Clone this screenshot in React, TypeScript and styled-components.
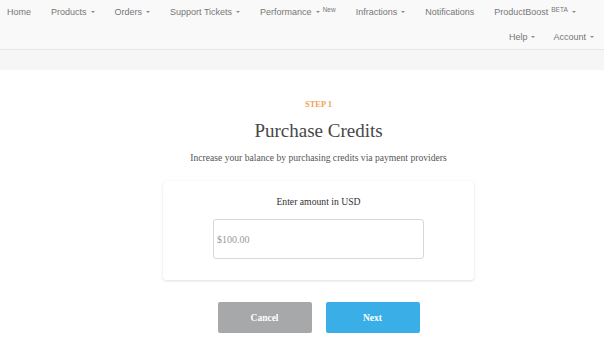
import React from "react";
import styled, { createGlobalStyle } from "styled-components";

const Global = createGlobalStyle`
  html, body { margin: 0; padding: 0; background: #ffffff; }
  body { width: 604px; height: 348px; overflow: hidden; }
  * { box-sizing: border-box; }
`;

const Page = styled.div`
  width: 604px;
  min-height: 348px;
  background: #ffffff;
`;

const NavBar = styled.nav`
  display: flex;
  flex-wrap: wrap;
  padding: 0 10px 0 7px;
  height: 50px;
  background: #f9f9f9;
  border-bottom: 1px solid #e6e6e6;
  font-family: "Liberation Sans", Arial, sans-serif;
  font-size: 9px;
  color: #777777;
`;

const NavGroup = styled.div<{ $right?: boolean }>`
  display: flex;
  gap: ${(p) => (p.$right ? "18px" : "20px")};
  margin-left: ${(p) => (p.$right ? "auto" : "0")};
  flex-shrink: 0;
`;

const NavItem = styled.div`
  display: flex;
  align-items: center;
  height: 24px;
  white-space: nowrap;
`;

const Caret = styled.span`
  display: inline-block;
  width: 0;
  height: 0;
  margin-left: 4px;
  border-left: 2px solid transparent;
  border-right: 2px solid transparent;
  border-top: 2.5px solid #8a8a8a;
`;

const Sup = styled.sup`
  font-size: 6.5px;
  margin-left: 3px;
  position: relative;
  top: -3px;
  vertical-align: baseline;
`;

const Band = styled.div`
  height: 20px;
  background: #f6f6f6;
`;

const Main = styled.main`
  display: flex;
  flex-direction: column;
  align-items: center;
  padding: 29px 0 0 33px;
  font-family: "Liberation Serif", "Times New Roman", serif;
`;

const Step = styled.div`
  font-size: 8.5px;
  line-height: 11px;
  font-weight: bold;
  color: #f3a255;
`;

const Title = styled.h1`
  margin: 10px 0 0;
  font-size: 19px;
  line-height: 22px;
  font-weight: normal;
  color: #474747;
`;

const Subtitle = styled.p`
  margin: 10px 0 0;
  font-size: 9.6px;
  line-height: 12px;
  color: #555555;
`;

const Card = styled.section`
  margin-top: 17px;
  width: 311px;
  padding: 15px 0 21px;
  display: flex;
  flex-direction: column;
  align-items: center;
  background: #ffffff;
  border-radius: 3px;
  box-shadow: 0 1px 3px rgba(0, 0, 0, 0.12), 0 0 1px rgba(0, 0, 0, 0.06);
`;

const Label = styled.label`
  font-size: 9.7px;
  line-height: 12px;
  color: #333333;
`;

const Input = styled.input`
  margin-top: 11px;
  width: 211px;
  height: 40px;
  padding: 0 0 0 3px;
  border: 1px solid #d8d8d8;
  border-radius: 3px;
  font-family: "Liberation Serif", "Times New Roman", serif;
  font-size: 10px;
  color: #333;
  outline: none;
  &::placeholder { color: #9a9a9a; }
`;

const Actions = styled.div`
  margin-top: 22px;
  display: flex;
  gap: 14px;
`;

const Button = styled.button<{ $primary?: boolean }>`
  width: 94px;
  height: 31px;
  border: none;
  border-radius: 2px;
  background: ${(p) => (p.$primary ? "#3aafe7" : "#a6a8a9")};
  color: #ffffff;
  font-family: "Liberation Serif", "Times New Roman", serif;
  font-weight: bold;
  font-size: 9.5px;
  cursor: pointer;
`;

type Item = { label: string; caret?: boolean; sup?: string; supFirst?: boolean };

const leftItems: Item[] = [
  { label: "Home" },
  { label: "Products", caret: true },
  { label: "Orders", caret: true },
  { label: "Support Tickets", caret: true },
  { label: "Performance", caret: true, sup: "New" },
  { label: "Infractions", caret: true },
  { label: "Notifications" },
  { label: "ProductBoost", caret: true, sup: "BETA", supFirst: true },
];

const rightItems: Item[] = [
  { label: "Help", caret: true },
  { label: "Account", caret: true },
];

function NavEntry({ item }: { item: Item }) {
  return (
    <NavItem>
      {item.label}
      {item.supFirst && item.sup && <Sup>{item.sup}</Sup>}
      {item.caret && <Caret />}
      {!item.supFirst && item.sup && <Sup>{item.sup}</Sup>}
    </NavItem>
  );
}

export default function App() {
  return (
    <Page>
      <Global />
      <NavBar>
        <NavGroup>
          {leftItems.map((it) => (
            <NavEntry key={it.label} item={it} />
          ))}
        </NavGroup>
        <NavGroup $right>
          {rightItems.map((it) => (
            <NavEntry key={it.label} item={it} />
          ))}
        </NavGroup>
      </NavBar>
      <Band />
      <Main>
        <Step>STEP 1</Step>
        <Title>Purchase Credits</Title>
        <Subtitle>Increase your balance by purchasing credits via payment providers</Subtitle>
        <Card>
          <Label htmlFor="amount">Enter amount in USD</Label>
          <Input id="amount" placeholder="$100.00" />
        </Card>
        <Actions>
          <Button>Cancel</Button>
          <Button $primary>Next</Button>
        </Actions>
      </Main>
    </Page>
  );
}
